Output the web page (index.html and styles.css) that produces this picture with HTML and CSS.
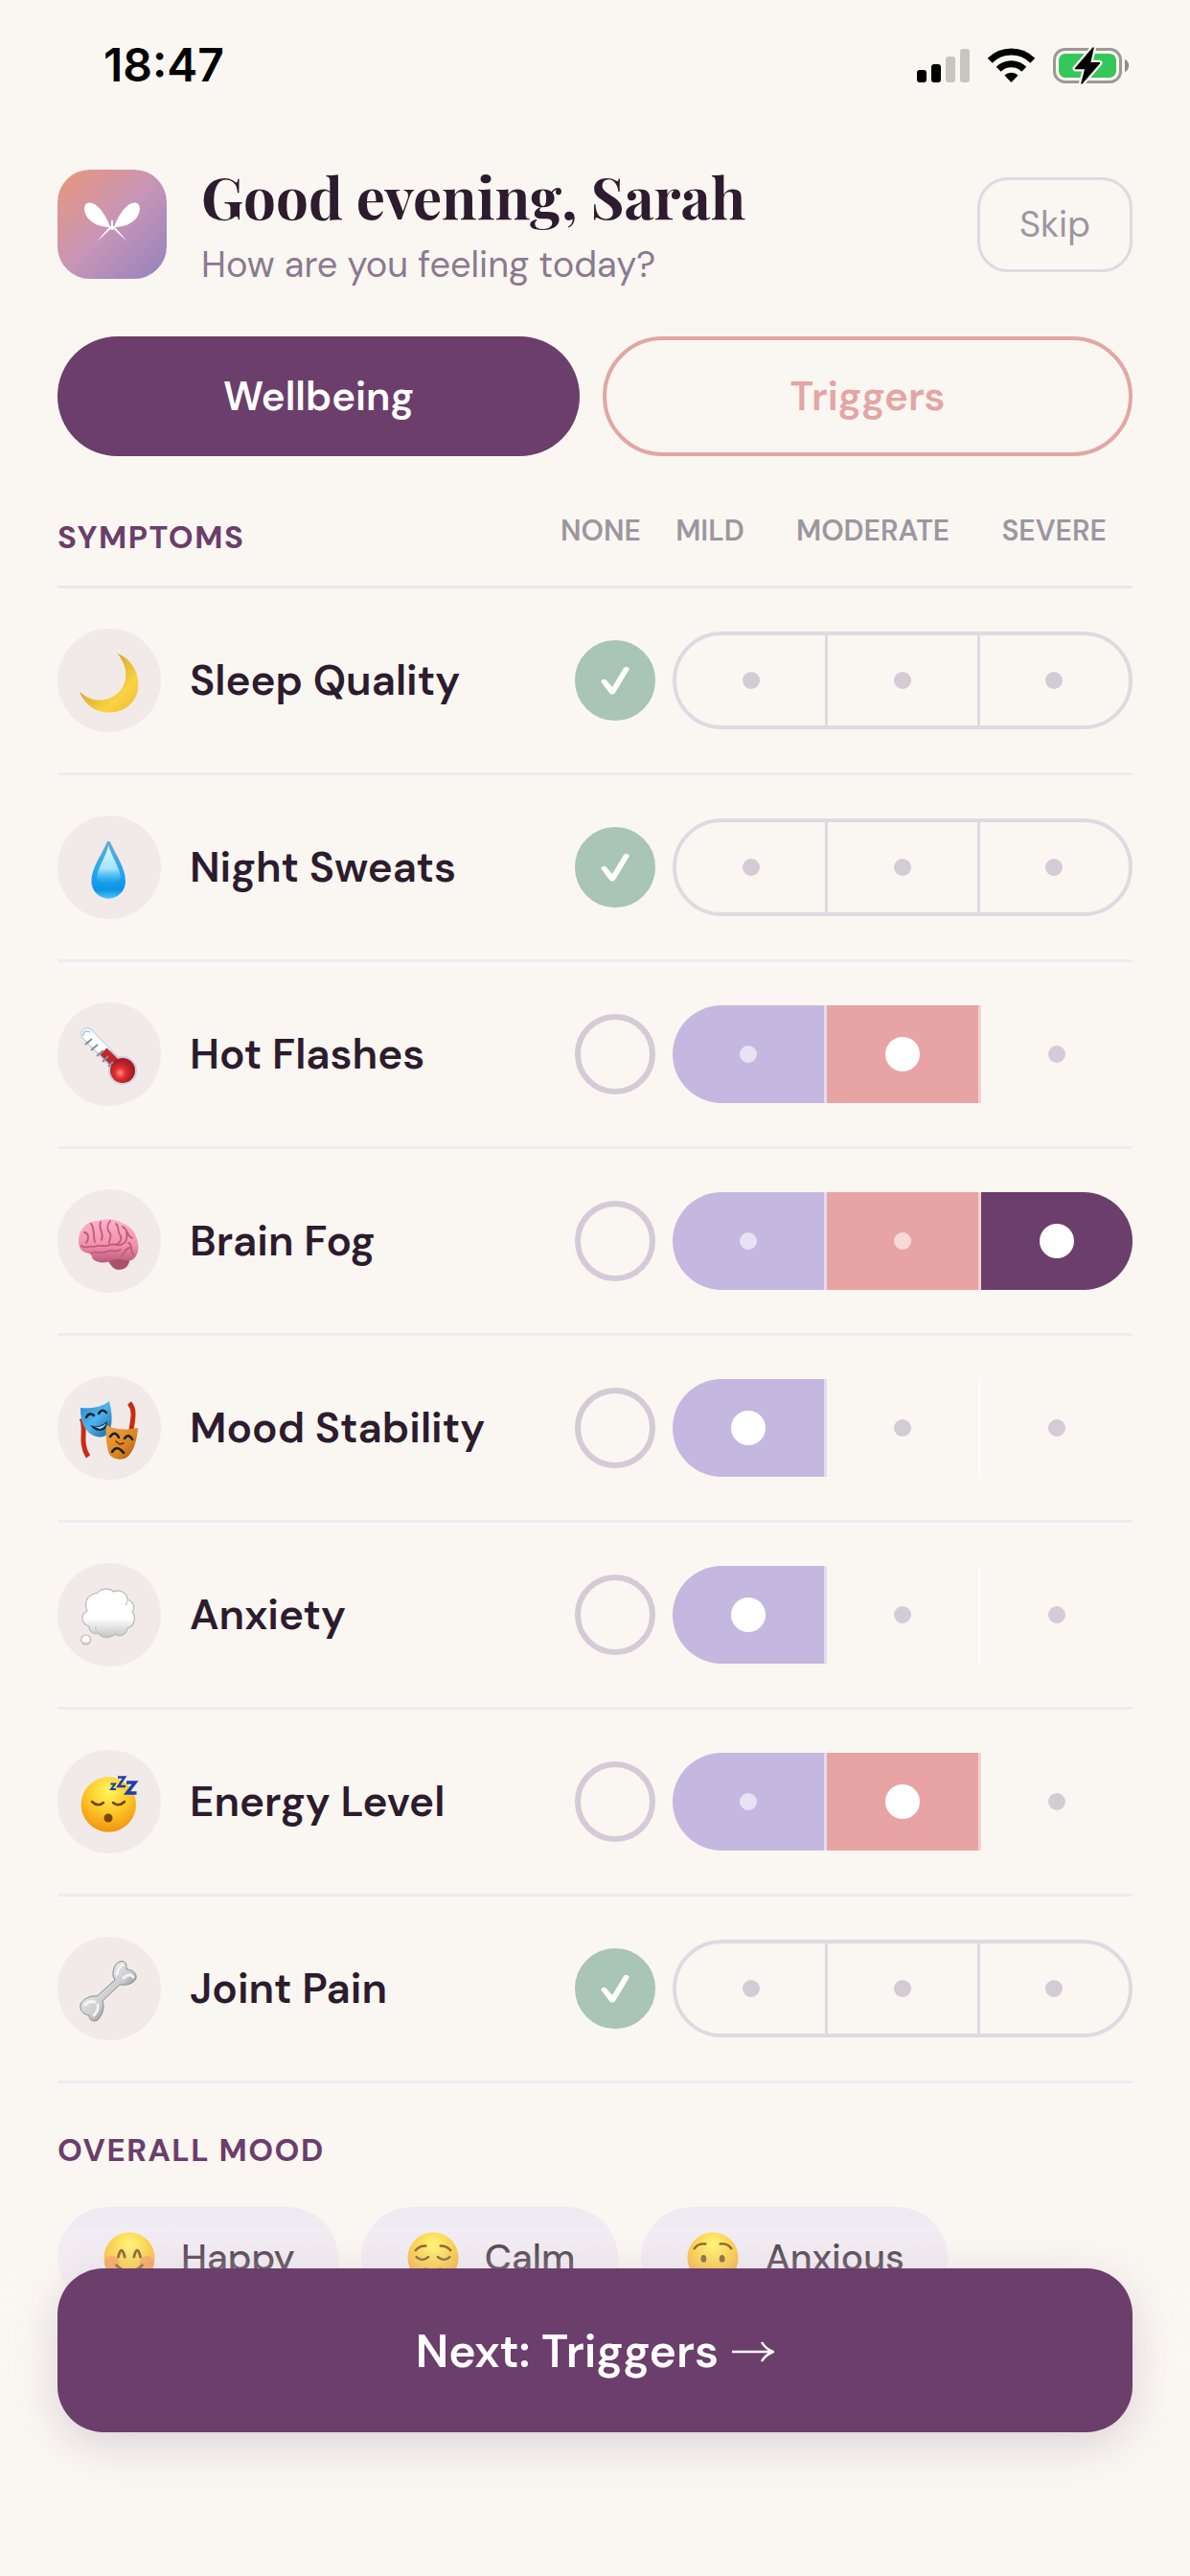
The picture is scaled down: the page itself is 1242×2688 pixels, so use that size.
FILE: index.html
```html
<!DOCTYPE html>
<html lang="en">
<head>
    <meta charset="UTF-8">
    <meta name="viewport" content="width=device-width, initial-scale=1.0">
    <title>Daily check-in</title>
    <link rel="stylesheet" href="styles.css">
</head>
<body>
    <div class="status-bar">
        <span class="time">18:47</span>
        <svg class="status-icons" viewBox="0 0 221 39" aria-hidden="true">
            <rect x="0" y="24" width="10" height="13" rx="3"/>
            <rect x="15" y="18" width="10" height="19" rx="3"/>
            <rect x="30" y="10" width="10" height="27" rx="3" fill="#c8c5c0"/>
            <rect x="45" y="2" width="10" height="35" rx="3" fill="#c8c5c0"/>
            <path d="M76.2 14.2A31.5 31.5 0 0 1 120.8 14.2M85.2 23.2A18.8 18.8 0 0 1 111.8 23.2" fill="none" stroke="#000" stroke-width="7"/>
            <path d="M98.5 37L91.4 29.6A10.4 10.4 0 0 1 105.6 29.6Z"/>
            <rect x="143.5" y="2.5" width="69" height="34" rx="11" fill="none" stroke="#9c9894" stroke-width="3"/>
            <rect x="148" y="7" width="60" height="25" rx="7" fill="#34c759"/>
            <path d="M217 13C222.500 15 222.500 24 217 26Z" fill="#8f8b88"/>
            <path d="M184 1L165.500 22.500H176L172 38L190.500 16.700H180.500Z" stroke="#faf7f2" stroke-width="6" stroke-linejoin="round"/>
            <path d="M184 1L165.500 22.500H176L172 38L190.500 16.700H180.500Z" stroke="#000" stroke-width="1.500" stroke-linejoin="round"/>
        </svg>
    </div>

    <main class="page">
        <header class="greeting">
            <svg class="logo" viewBox="0 0 114 114" aria-hidden="true">
                <defs>
                    <linearGradient id="logo-bg" x1="0" y1="0" x2="1" y2="1">
                        <stop offset="0.100" stop-color="#e39685"/>
                        <stop offset="0.500" stop-color="#c795b8"/>
                        <stop offset="0.950" stop-color="#9a84bb"/>
                    </linearGradient>
                </defs>
                <rect width="114" height="114" rx="34" fill="url(#logo-bg)"/>
                <g fill="#fff">
                    <path d="M55 60C50 46 41 34 33 34.500C26 35 27 46 33 52C39 58 47 60 55 60Z"/>
                    <path d="M59 60C64 46 73 34 81 34.500C88 35 87 46 81 52C75 58 67 60 59 60Z"/>
                    <rect x="56" y="53" width="2" height="10"/>
                    <path d="M54 59H60V61H54Z"/>
                    <path d="M54 60L56 61.500L41 75Z"/>
                    <path d="M60 60L58 61.500L73 75Z"/>
                </g>
            </svg>
            <div class="greeting-text">
                <h1>Good evening, Sarah</h1>
                <p>How are you feeling today?</p>
            </div>
            <button type="button" class="skip">Skip</button>
        </header>

        <nav class="tabs">
            <button type="button" class="tab tab-active">Wellbeing</button>
            <button type="button" class="tab tab-outline">Triggers</button>
        </nav>

        <div class="table-head">
            <h2>Symptoms</h2>
            <div class="columns">
                <span class="column-none">None</span>
                <div class="column-levels">
                    <span>Mild</span>
                    <span>Moderate</span>
                    <span>Severe</span>
                </div>
            </div>
        </div>

        <div class="symptom" role="radiogroup" aria-labelledby="sleep">
            <svg class="symptom-icon" viewBox="0 0 108 108" aria-hidden="true">
                <defs>
                    <linearGradient id="moon" x1="0" y1="0" x2="1" y2="1">
                        <stop offset="0.300" stop-color="#d9a52e"/>
                        <stop offset="0.700" stop-color="#f9d343"/>
                        <stop offset="1" stop-color="#efb72f"/>
                    </linearGradient>
                </defs>
                <path d="M62 25.500C91 37 93 79 62 86.500C43 91 28 80 23 65.500C33 76 50 78 62 68C74 58 75 40 62 25.500Z" fill="url(#moon)"/>
            </svg>
            <span class="symptom-name" id="sleep">Sleep Quality</span>
            <input type="radio" name="sleep" class="none" aria-label="None" checked>
            <div class="track">
                <input type="radio" name="sleep" class="level mild" aria-label="Mild">
                <input type="radio" name="sleep" class="level moderate" aria-label="Moderate">
                <input type="radio" name="sleep" class="level severe" aria-label="Severe">
            </div>
        </div>

        <div class="symptom" role="radiogroup" aria-labelledby="sweats">
            <svg class="symptom-icon" viewBox="0 0 108 108" aria-hidden="true">
                <defs>
                    <linearGradient id="drop" x1="0" y1="0" x2="0" y2="1">
                        <stop offset="0" stop-color="#6aaad0"/>
                        <stop offset="0.500" stop-color="#27a9ee"/>
                        <stop offset="0.850" stop-color="#0c94e6"/>
                        <stop offset="1" stop-color="#4cc8fb"/>
                    </linearGradient>
                    <linearGradient id="drop-shine" x1="0" y1="0" x2="0" y2="1">
                        <stop offset="0" stop-color="#e0f8ff"/>
                        <stop offset="0.600" stop-color="#a5e4fd"/>
                        <stop offset="1" stop-color="#3db8f7" stop-opacity="0"/>
                    </linearGradient>
                </defs>
                <path d="M51.500 28Q53.300 25 55.200 28C60 40 71 54 71 68.500A17.800 18.200 0 0 1 35.400 68.500C35.400 54 47 40 51.500 28Z" fill="url(#drop)"/>
                <path d="M53.300 31C56 42 65 54 66 65C62 74 45 74 41 65C42 54 51 42 53.300 31Z" fill="url(#drop-shine)"/>
            </svg>
            <span class="symptom-name" id="sweats">Night Sweats</span>
            <input type="radio" name="sweats" class="none" aria-label="None" checked>
            <div class="track">
                <input type="radio" name="sweats" class="level mild" aria-label="Mild">
                <input type="radio" name="sweats" class="level moderate" aria-label="Moderate">
                <input type="radio" name="sweats" class="level severe" aria-label="Severe">
            </div>
        </div>

        <div class="symptom" role="radiogroup" aria-labelledby="flashes">
            <svg class="symptom-icon" viewBox="0 0 108 108" aria-hidden="true">
                <defs>
                    <radialGradient id="bulb" cx=".4" cy=".6">
                        <stop offset="0" stop-color="#ff8a80"/>
                        <stop offset="0.450" stop-color="#e02c30"/>
                        <stop offset="1" stop-color="#a81c26"/>
                    </radialGradient>
                </defs>
                <path d="M31 33L68 71" stroke="#c3d5e0" stroke-width="14" stroke-linecap="round"/>
                <circle cx="68" cy="71" r="15" fill="#c9d3dc"/>
                <path d="M31 33L50 52" stroke="#fff" stroke-width="11" stroke-linecap="round"/>
                <path d="M48 51L66 69" stroke="#c3272d" stroke-width="10"/>
                <circle cx="68" cy="71" r="13" fill="url(#bulb)"/>
                <path d="M29 44L36 38M35 50L42 44M41 56L48 50M47 62L53 56M53 67L58 62" stroke="#85909a" stroke-width="2"/>
                <path d="M27 35Q27 28 34 31" fill="none" stroke="#a9c6d6" stroke-width="1.500"/>
            </svg>
            <span class="symptom-name" id="flashes">Hot Flashes</span>
            <input type="radio" name="flashes" class="none" aria-label="None">
            <div class="track">
                <input type="radio" name="flashes" class="level mild" aria-label="Mild">
                <input type="radio" name="flashes" class="level moderate" aria-label="Moderate" checked>
                <input type="radio" name="flashes" class="level severe" aria-label="Severe">
            </div>
        </div>

        <div class="symptom" role="radiogroup" aria-labelledby="fog">
            <svg class="symptom-icon" viewBox="0 0 108 108" aria-hidden="true">
                <defs>
                    <linearGradient id="brain" x1="0" y1="0" x2="0" y2="1">
                        <stop offset="0" stop-color="#fbb3ca"/>
                        <stop offset="0.600" stop-color="#f091b0"/>
                        <stop offset="1" stop-color="#b95a78"/>
                    </linearGradient>
                </defs>
                <path d="M53 75C58 72 72 70 75 74C75 80 70 84 64 84C59 84 56 80 53 75Z" fill="#a9506c"/>
                <path d="M22 55C22 42 30 33 42 33C50 30 62 31 67 35C75 38 80 43 82 50C86 58 85 68 79 73C73 77 66 72 60 73C52 77 43 78 37 73C35 69 36 68 33 67C26 66 22 62 22 55Z" fill="url(#brain)"/>
                <g fill="none" stroke="#c4587d" stroke-width="1.800" stroke-linecap="round">
                    <path d="M28 45C33 46 33 51 30 56M35 36C39 40 37 48 39 55M45 34C42 42 49 44 46 53M55 33C51 38 52 43 55 46C57 50 53 54 54 57M61 36C65 39 62 44 65 47C68 51 66 55 62 57"/>
                    <path d="M25 59C29 63 33 58 38 60C44 57 50 61 55 58C60 56 63 60 68 57C73 55 73 50 72 45M35 67C40 63 45 69 51 65C57 62 60 67 66 63M68 39C74 42 72 49 78 51M74 56C79 57 75 63 79 68M66 70C71 67 70 62 75 61"/>
                </g>
            </svg>
            <span class="symptom-name" id="fog">Brain Fog</span>
            <input type="radio" name="fog" class="none" aria-label="None">
            <div class="track">
                <input type="radio" name="fog" class="level mild" aria-label="Mild">
                <input type="radio" name="fog" class="level moderate" aria-label="Moderate">
                <input type="radio" name="fog" class="level severe" aria-label="Severe" checked>
            </div>
        </div>

        <div class="symptom" role="radiogroup" aria-labelledby="mood">
            <svg class="symptom-icon" viewBox="0 0 108 108" aria-hidden="true">
                <defs>
                    <linearGradient id="comedy" x1="0" y1="0" x2="1" y2="1">
                        <stop offset="0" stop-color="#2c86c4"/>
                        <stop offset="0.500" stop-color="#4fb4ee"/>
                        <stop offset="1" stop-color="#1b639c"/>
                    </linearGradient>
                    <linearGradient id="tragedy" x1="0" y1="0" x2="1" y2="1">
                        <stop offset="0" stop-color="#f0a544"/>
                        <stop offset="0.600" stop-color="#dc8420"/>
                        <stop offset="1" stop-color="#9c5311"/>
                    </linearGradient>
                </defs>
                <path d="M25 44C31 54 22 69 32 84M75 28C82 36 78 46 77 57" fill="none" stroke="#c92b10" stroke-width="5"/>
                <path d="M24 33C37 34 47 32 54 26C57 38 59 54 51 61C46 66 36 63 31 57C25 50 24 42 24 33Z" fill="url(#comedy)"/>
                <path d="M51 51C62 57 73 56 84 54C83 66 80 79 72 85C66 88 57 87 54 81C51 74 50 62 51 51Z" fill="url(#tragedy)"/>
                <g fill="none" stroke="#14202c" stroke-width="2.500" stroke-linecap="round">
                    <path d="M30 43Q33 37 38 41M43 39Q47 33 51 38"/>
                    <path d="M55 63Q60 56 64 64M70 65Q74 59 78 66M57 79Q62 71 69 80"/>
                    <path d="M61 68L65 71L69 70" stroke="#5e3208" stroke-width="1.500"/>
                </g>
                <path d="M34 51Q43 55 52 47Q52 57 44 57Q38 57 34 51Z" fill="#152e49"/>
                <path d="M37 52Q44 55 51 49Q49 54 44 55Z" fill="#9ad8fb"/>
            </svg>
            <span class="symptom-name" id="mood">Mood Stability</span>
            <input type="radio" name="mood" class="none" aria-label="None">
            <div class="track">
                <input type="radio" name="mood" class="level mild" aria-label="Mild" checked>
                <input type="radio" name="mood" class="level moderate" aria-label="Moderate">
                <input type="radio" name="mood" class="level severe" aria-label="Severe">
            </div>
        </div>

        <div class="symptom" role="radiogroup" aria-labelledby="anxiety">
            <svg class="symptom-icon" viewBox="0 0 108 108" aria-hidden="true">
                <defs>
                    <linearGradient id="cloud" x1="0" y1="0" x2="0" y2="1">
                        <stop offset="0.600" stop-color="#fff"/>
                        <stop offset="1" stop-color="#c4c4c4"/>
                    </linearGradient>
                </defs>
                <g fill="url(#cloud)" stroke="#b9b9b9" stroke-width="1.200">
                    <path d="M42 31C45 26 56 26 58 30C64 27 73 31 73 38C79 40 82 46 78 51C83 57 80 66 73 68C72 75 64 78 60 74C55 79 46 79 43 73C37 75 33 71 33 66C25 64 23 54 31 50C28 43 29 33 42 31Z"/>
                    <circle cx="29.700" cy="80" r="5"/>
                </g>
                <path d="M43 73Q39 71 40 66M60 74Q61 72 60 70M73 39Q73 42 71 44" fill="none" stroke="#ccc" stroke-width="1.500"/>
            </svg>
            <span class="symptom-name" id="anxiety">Anxiety</span>
            <input type="radio" name="anxiety" class="none" aria-label="None">
            <div class="track">
                <input type="radio" name="anxiety" class="level mild" aria-label="Mild" checked>
                <input type="radio" name="anxiety" class="level moderate" aria-label="Moderate">
                <input type="radio" name="anxiety" class="level severe" aria-label="Severe">
            </div>
        </div>

        <div class="symptom" role="radiogroup" aria-labelledby="energy">
            <svg class="symptom-icon" viewBox="0 0 108 108" aria-hidden="true">
                <defs>
                    <radialGradient id="face" cx=".5" cy=".25" r=".8">
                        <stop offset="0" stop-color="#fff75e"/>
                        <stop offset="0.500" stop-color="#fdc727"/>
                        <stop offset="1" stop-color="#f08c0e"/>
                    </radialGradient>
                </defs>
                <circle cx="53.300" cy="57" r="28.700" fill="url(#face)"/>
                <g fill="none" stroke="#6d4408" stroke-width="2.500" stroke-linecap="round">
                    <path d="M36 54Q42 60 48 55M58 55Q64 60 70 54"/>
                </g>
                <circle cx="53" cy="71" r="4.500" fill="#7a4706"/>
                <g fill="none" stroke="#1c3fae">
                    <path d="M55.500 35.500H60L56 41H61" stroke-width="2"/>
                    <path d="M63 28.500H70L63.500 38H71" stroke-width="2.500"/>
                    <path d="M72 34H81L72.500 45H82.500" stroke-width="3.500"/>
                </g>
            </svg>
            <span class="symptom-name" id="energy">Energy Level</span>
            <input type="radio" name="energy" class="none" aria-label="None">
            <div class="track">
                <input type="radio" name="energy" class="level mild" aria-label="Mild">
                <input type="radio" name="energy" class="level moderate" aria-label="Moderate" checked>
                <input type="radio" name="energy" class="level severe" aria-label="Severe">
            </div>
        </div>

        <div class="symptom" role="radiogroup" aria-labelledby="joint">
            <svg class="symptom-icon" viewBox="0 0 108 108" aria-hidden="true">
                <defs>
                    <linearGradient id="bone" x1="0" y1="0" x2="1" y2="1">
                        <stop offset="0.350" stop-color="#e0e2e3"/>
                        <stop offset="0.550" stop-color="#c9cbcc"/>
                        <stop offset="0.750" stop-color="#7d8081"/>
                    </linearGradient>
                </defs>
                <path d="M58 41C57 32 62 25 68 25.500C73 27 72 31 72 34C78 34 83 38 82 43C80 49 72 51 65 50L47 67C50 74 46 84 41 87.500C36 89 33 86 33 82C27 81 23 77 24 71C26 65 34 61 41 62L60 45Z" fill="url(#bone)" stroke="#8b8d8e" stroke-width="1"/>
                <path d="M62 39Q64 31 68 29M69 43Q76 37 79 42M29 71Q33 66 39 68M38 82Q43 77 42 71" fill="none" stroke="#f2f3f3" stroke-width="3" stroke-linecap="round"/>
            </svg>
            <span class="symptom-name" id="joint">Joint Pain</span>
            <input type="radio" name="joint" class="none" aria-label="None" checked>
            <div class="track">
                <input type="radio" name="joint" class="level mild" aria-label="Mild">
                <input type="radio" name="joint" class="level moderate" aria-label="Moderate">
                <input type="radio" name="joint" class="level severe" aria-label="Severe">
            </div>
        </div>

        <section class="overall">
            <h2>Overall mood</h2>
            <div class="moods">
                <button type="button" class="mood">
                    <svg class="mood-icon" viewBox="0 0 56 56" aria-hidden="true">
                        <circle cx="28" cy="28" r="27.500" fill="url(#face)"/>
                        <circle cx="9" cy="34" r="8" fill="#f26c45" opacity=".5"/>
                        <circle cx="47" cy="34" r="8" fill="#f26c45" opacity=".5"/>
                        <path d="M16 27Q19.500 13 23 27M33 27Q36.500 13 40 27M14 36Q28 50 42 36" fill="none" stroke="#6d4408" stroke-width="3" stroke-linecap="round"/>
                    </svg>
                    Happy
                </button>
                <button type="button" class="mood">
                    <svg class="mood-icon" viewBox="0 0 56 56" aria-hidden="true">
                        <circle cx="28" cy="28" r="27.500" fill="url(#face)"/>
                        <path d="M9 20Q13 15 20 15M36 15Q43 15 47 20M10 27Q16 33 23 27M33 27Q40 33 46 27M20 40Q28 45 36 40" fill="none" stroke="#6d4408" stroke-width="2.500" stroke-linecap="round"/>
                    </svg>
                    Calm
                </button>
                <button type="button" class="mood">
                    <svg class="mood-icon" viewBox="0 0 56 56" aria-hidden="true">
                        <circle cx="28" cy="28" r="27.500" fill="url(#face)"/>
                        <path d="M8 18Q12 12 20 13M36 13Q44 12 48 18M20 44Q28 38 36 44" fill="none" stroke="#6d4408" stroke-width="2.500" stroke-linecap="round"/>
                        <ellipse cx="18" cy="29" rx="3" ry="4" fill="#6d4408"/>
                        <ellipse cx="38" cy="29" rx="3" ry="4" fill="#6d4408"/>
                    </svg>
                    Anxious
                </button>
            </div>
        </section>
    </main>

    <footer class="bottom-bar">
        <button type="button" class="next">
            Next: Triggers
            <svg class="arrow" viewBox="0 0 44 24" aria-hidden="true">
                <path d="M0 12H42M31 2Q35 9 43 12Q35 15 31 22" fill="none" stroke="#fff" stroke-width="2.500"/>
            </svg>
        </button>
    </footer>
</body>
</html>
```

FILE: styles.css
```css
*{
    margin: 0;
    padding: 0;
}
body{
    min-height: 100vh;
    background: #faf7f2;
    color: #2d1b2e;
    font-family: "DM Sans", Lato, "Open Sans", sans-serif;
}
button{
    border: none;
    background: none;
    font-family: inherit;
    cursor: pointer;
}

/* status bar */
.status-bar{
    display: flex;
    justify-content: space-between;
    align-items: center;
    height: 136px;
    padding: 0 64px 0 108px;
}
.time{
    font: 600 48px/60px Inter, sans-serif;
    color: #000;
}
.status-icons{
    width: 221px;
    height: 39px;
}

/* greeting */
.page{
    padding: 30px 60px 240px;
}
.greeting{
    display: flex;
    align-items: center;
    gap: 36px;
}
.logo{
    width: 114px;
    height: 114px;
}
.greeting-text{
    flex: 1;
}
.greeting h1{
    margin-bottom: 8px;
    font: bold 60px/76px "Playfair Display", "Liberation Serif", serif;
}
.greeting p{
    font-size: 38px;
    line-height: 52px;
    color: #8b7a8f;
}
.skip{
    padding: 21px 41px;
    border: 3px solid #dedae2;
    border-radius: 32px;
    font-size: 38px;
    line-height: 51px;
    color: #9d96a0;
}

/* tabs */
.tabs{
    display: flex;
    gap: 24px;
    margin-top: 49px;
}
.tab{
    flex: 1;
    box-sizing: content-box;
    padding: 32px 0;
    border-radius: 63px;
    font-size: 42px;
    font-weight: 600;
    line-height: 53px;
}
.tab-active{
    background: #6b3e6b;
    color: #fff;
}
.tab-outline{
    border: 4px solid #e3a5a5;
    color: #e3a5a5;
}

/* symptoms */
h2{
    font-size: 33px;
    font-weight: 700;
    line-height: 50px;
    letter-spacing: 1.5px;
    text-transform: uppercase;
    color: #6b3e6b;
}
.table-head{
    display: flex;
    justify-content: space-between;
    margin-top: 60px;
    padding-bottom: 25px;
    border-bottom: 3px solid #ebe7ee;
}
.columns{
    display: flex;
    gap: 9px;
    font-size: 30px;
    font-weight: 600;
    line-height: 36px;
    text-transform: uppercase;
    color: #9d96a0;
}
.column-none{
    width: 84px;
    text-align: center;
}
.column-levels{
    display: flex;
    justify-content: space-around;
    width: 504px;
}
.symptom{
    display: flex;
    align-items: center;
    padding: 42px 0;
    border-bottom: 3px solid #efebf1;
}
.symptom-icon{
    width: 108px;
    height: 108px;
    border-radius: 50%;
    background: #f2eae9;
}
.symptom-name{
    flex: 1;
    margin-left: 30px;
    font-size: 44px;
    font-weight: 600;
    line-height: 58px;
}
.none,
.level{
    appearance: none;
    display: flex;
    align-items: center;
    justify-content: center;
    cursor: pointer;
}
.none{
    box-sizing: border-box;
    width: 84px;
    height: 84px;
    margin-right: 18px;
    border: 6px solid #d3cbd6;
    border-radius: 50%;
}
.none:checked{
    border-color: #a8c5b5;
    background: #a8c5b5;
}
.none:checked::before{
    content: "";
    width: 30px;
    height: 30px;
    background: #fff;
    clip-path: path("M0 16Q3 12 6 15L12 22L24 2Q27 -1 30 3L15 28Q12 31 9 28Z");
}
.track{
    box-sizing: border-box;
    display: flex;
    width: 480px;
    height: 102px;
    border-radius: 51px;
    overflow: hidden;
}
.level{
    flex: 1;
    border-right: 3px solid rgba(255, 255, 255, .5);
}
.level:last-child{
    border-right: none;
}
.level::before{
    content: "";
    width: 18px;
    height: 18px;
    border-radius: 50%;
    background: #d3cbd6;
}
.level:checked::before{
    width: 36px;
    height: 36px;
    background: #fff;
}
.none:checked + .track{
    border: 4px solid #dfd9e2;
}
.none:checked + .track .level{
    border-color: #dfd9e2;
}
/* every level up to the chosen one is filled */
.mild:checked,
.mild:has(~ :checked){
    background: #c4b8e0;
}
.moderate:checked,
.moderate:has(~ :checked){
    background: #e8a4a4;
}
.severe:checked{
    background: #6b3e6b;
}
.level:has(~ :checked)::before{
    background: rgba(255, 255, 255, .6);
}

/* overall mood */
.overall{
    margin-top: 45px;
}
.moods{
    display: flex;
    gap: 24px;
    margin-top: 34px;
}
.mood{
    display: flex;
    align-items: center;
    gap: 27px;
    padding: 26px 45px 26px 48px;
    border-radius: 54px;
    background: #f0eaf3;
    color: #2d1b2e;
    font-size: 39px;
    font-weight: 500;
    line-height: 50px;
}
.mood-icon{
    width: 54px;
    height: 54px;
}

/* bottom bar */
.bottom-bar{
    position: fixed;
    left: 0;
    right: 0;
    bottom: 0;
    padding: 66px 60px 150px;
    background: linear-gradient(rgba(250, 247, 242, 0), #faf7f2 50%);
}
.next{
    display: flex;
    align-items: center;
    justify-content: center;
    gap: 14px;
    width: 100%;
    padding: 56px 0 54px;
    border-radius: 48px;
    background: #6b3e6b;
    box-shadow: 0 12px 48px rgba(107, 62, 107, .2);
    color: #fff;
    font-size: 48px;
    font-weight: 600;
    line-height: 61px;
}
.arrow{
    width: 44px;
    height: 24px;
}
```
